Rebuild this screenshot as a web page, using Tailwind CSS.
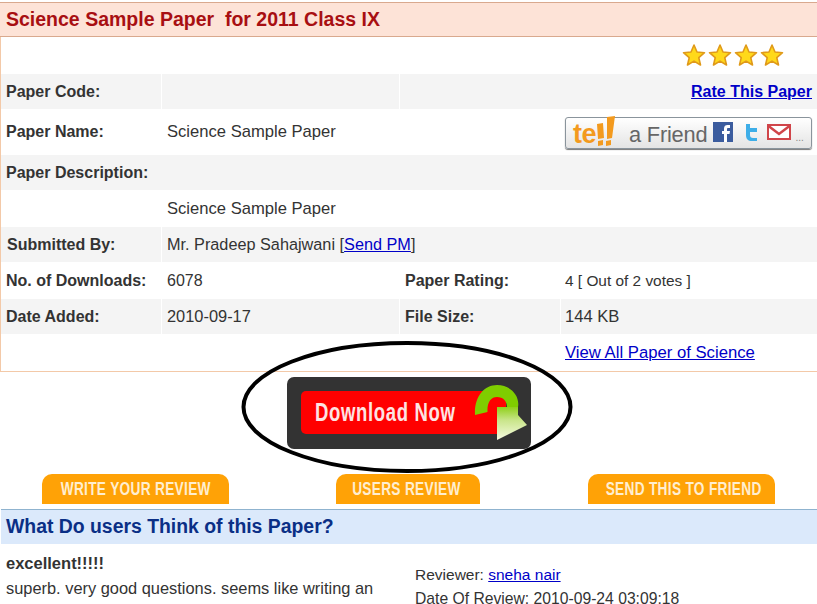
<!DOCTYPE html>
<html>
<head>
<meta charset="utf-8">
<script src="https://cdn.jsdelivr.net/npm/@tailwindcss/browser@4"></script>
</head>
<body class="bg-white">
<div class="relative w-[817px] h-[604px] overflow-hidden bg-white font-['Liberation_Sans',Arial,sans-serif] text-[16px] text-[#333]">
  <div class="h-[2px]"></div>
  <div class="h-[35px] bg-[#fde3d7] border-y border-[#d9a98e] pl-[6px] flex items-center text-[19.5px] font-bold text-[#a80f12] whitespace-pre">Science Sample Paper  for 2011 Class IX</div>

  <div class="grid grid-cols-[160px_237px_160px_1fr] gap-x-px border-b border-l border-[#f3c9a8] h-[335px] grid-rows-[37px_35px_46px_35px_37px_35px_37px_35px_1fr]">
    <div class="col-span-4 flex items-start justify-end pr-[33px] pt-[6px] gap-[2px]">
      <svg class="w-[24px] h-[24px]" viewBox="0 0 24 24"><path d="M12 2l3 7 7.500 .7-5.700 5 1.700 7.300-6.500-3.900-6.500 3.900 1.700-7.300-5.700-5 7.500-.7z" fill="#ffd91a" stroke="#e09a1a" stroke-width="1.600" stroke-linejoin="round"/></svg>
      <svg class="w-[24px] h-[24px]" viewBox="0 0 24 24"><path d="M12 2l3 7 7.500 .7-5.700 5 1.700 7.300-6.500-3.900-6.500 3.900 1.700-7.300-5.700-5 7.500-.7z" fill="#ffd91a" stroke="#e09a1a" stroke-width="1.600" stroke-linejoin="round"/></svg>
      <svg class="w-[24px] h-[24px]" viewBox="0 0 24 24"><path d="M12 2l3 7 7.500 .7-5.700 5 1.700 7.300-6.500-3.900-6.500 3.900 1.700-7.300-5.700-5 7.500-.7z" fill="#ffd91a" stroke="#e09a1a" stroke-width="1.600" stroke-linejoin="round"/></svg>
      <svg class="w-[24px] h-[24px]" viewBox="0 0 24 24"><path d="M12 2l3 7 7.500 .7-5.700 5 1.700 7.300-6.500-3.900-6.500 3.900 1.700-7.300-5.700-5 7.500-.7z" fill="#ffd91a" stroke="#e09a1a" stroke-width="1.600" stroke-linejoin="round"/></svg>
    </div>

    <div class="bg-[#f4f4f4] flex items-center pl-[5px] font-bold">Paper Code:</div>
    <div class="bg-[#f4f4f4]"></div>
    <div class="col-span-2 bg-[#f4f4f4] flex items-center justify-end pr-[5px] font-bold"><a class="underline text-[#0000c8]" href="#">Rate This Paper</a></div>

    <div class="flex items-center pl-[5px] font-bold">Paper Name:</div>
    <div class="flex items-center pl-[5px] text-[16.6px]">Science Sample Paper</div>
    <div></div>
    <div class="flex items-center pl-[4px]">
      <div class="w-[247px] h-[32px] mt-[1px] rounded-[3px] border border-[#8a949c] shadow-[0_1px_1px_#777] bg-gradient-to-b from-white to-[#e4e4e4] flex items-center relative">
        <span class="ml-[7px] text-[27px] leading-none font-bold text-[#f39a1e] tracking-[-0.5px] mt-[4px]">te</span><svg class="w-[24px] h-[30px] -mt-[3px]" viewBox="0 0 24 30"><path d="M1 8l6-1 1 15-6 1zM11 1l8-1-3 22-5 1zM2 25l5-1v5l-5 1zM10 25l5-1v5l-5 1z" fill="#f39a1e"/></svg>
        <span class="ml-[9px] text-[21.8px] leading-none text-[#666] mt-[5px] tracking-[-0.2px] whitespace-nowrap">a Friend</span>
        <svg class="ml-[6px] w-[20px] h-[20px] -mt-[1px] shrink-0" viewBox="0 0 20 20"><rect width="20" height="20" fill="#3b5c9e"/><path d="M11 20v-8H9V9h2V6.500C11 4 12.500 3 14.500 3H17v3h-1.800c-.8 0-1.200.4-1.200 1.200V9h3l-.5 3H14v8z" fill="#fff"/></svg>
        <svg class="ml-[11px] w-[15px] h-[19px] -mt-[1px] shrink-0" viewBox="0 0 15 19"><path d="M2 1h4v4h7v4H6v3c0 2 1 3 3 3h4v3H8c-4 0-6-2-6-6z" fill="#3eaee8"/></svg>
        <svg class="ml-[8px] w-[24px] h-[16px] -mt-[2px] shrink-0" viewBox="0 0 24 16"><rect x="1" y="1" width="22" height="14" fill="#fff" stroke="#d0454a" stroke-width="2"/><path d="M1.500 2l10.500 8L22.500 2" fill="none" stroke="#d0454a" stroke-width="2.500"/></svg>
        <span class="ml-[4px] text-[10px] leading-none text-[#888] mt-[10px]">...</span>
      </div>
    </div>

    <div class="col-span-4 bg-[#f4f4f4] flex items-center pl-[5px] font-bold">Paper Description:</div>

    <div></div>
    <div class="col-span-3 flex items-center pl-[5px] pt-px text-[16.6px]">Science Sample Paper</div>

    <div class="bg-[#f4f4f4] flex items-center pl-[6px] font-bold">Submitted By:</div>
    <div class="col-span-3 bg-[#f4f4f4] flex items-center pl-[5px] whitespace-pre text-[16.25px]">Mr. Pradeep Sahajwani [<a class="underline text-[#0000c8]" href="#">Send PM</a>]</div>

    <div class="flex items-center pl-[5px] font-bold">No. of Downloads:</div>
    <div class="flex items-center pl-[5px]">6078</div>
    <div class="flex items-center pl-[5px] font-bold">Paper Rating:</div>
    <div class="flex items-center pl-[4px] text-[15.4px]">4 [ Out of 2 votes ]</div>

    <div class="bg-[#f4f4f4] flex items-center pl-[5px] font-bold">Date Added:</div>
    <div class="bg-[#f4f4f4] flex items-center pl-[5px] text-[16.4px]">2010-09-17</div>
    <div class="bg-[#f4f4f4] flex items-center pl-[5px] font-bold">File Size:</div>
    <div class="bg-[#f4f4f4] flex items-center pl-[4px] pt-px text-[16.6px]">144 KB</div>

    <div class="col-span-3"></div>
    <div class="flex items-center pl-[4px] text-[16.7px] pt-px"><a class="underline text-[#0000c8]" href="#">View All Paper of Science</a></div>
  </div>

  <div class="flex justify-center pt-[5px] h-[102px] ml-[2px]">
    <div class="relative w-[244px] h-[72px] rounded-[7px] bg-[#333] -ml-[2px]">
      <div class="absolute left-[14px] top-[14px] w-[205px] h-[43px] rounded-[5px] bg-[#f00] flex items-center pl-[14px] pb-[1px]">
        <span class="inline-block origin-left scale-x-[0.74] font-bold text-[25px] leading-none text-[#fde3e3] tracking-[0.9px] whitespace-nowrap">Download Now</span>
      </div>
      <svg class="absolute left-[185px] top-0 w-[59px] h-[72px]" viewBox="0 0 59 72">
        <defs>
          <linearGradient id="arrow" x1="0" y1="0" x2="0" y2="1"><stop offset="0" stop-color="#8fd01a"/><stop offset="0.4" stop-color="#c9e58a"/><stop offset="1" stop-color="#f6fbe2"/></linearGradient>
        </defs>
        <path d="M3 38C2 20 12 8 25 8C39 8 48 19 46 30L35 30C35 24 31 20 25 20C19 20 15 25 15.500 35Z" fill="#7fce00"/>
        <path d="M25 30L46 30L46 38L55 48L25 63Z" fill="url(#arrow)"/>
      </svg>
    </div>
  </div>

  <div class="flex h-[30px]">
    <div class="ml-[42px] w-[187px] rounded-t-[10px] bg-[#ffa206] flex items-center justify-center"><span class="inline-block scale-x-[0.76] font-bold text-[18px] text-[#ffeed0] whitespace-nowrap tracking-[0.4px]">WRITE YOUR REVIEW</span></div>
    <div class="ml-[107px] w-[144px] rounded-t-[10px] bg-[#ffa206] flex items-center justify-center pr-[4px]"><span class="inline-block scale-x-[0.76] font-bold text-[18px] text-[#ffeed0] whitespace-nowrap tracking-[0.4px]">USERS REVIEW</span></div>
    <div class="ml-[108px] w-[187px] rounded-t-[10px] bg-[#ffa206] flex items-center justify-center pl-[4px]"><span class="inline-block scale-x-[0.76] font-bold text-[18px] text-[#ffeed0] whitespace-nowrap tracking-[0.4px]">SEND THIS TO FRIEND</span></div>
  </div>

  <div class="mt-[5px] h-[35px] bg-[#dbe9fb] border-t border-[#8fb3cf] ml-px pl-[5px] flex items-center text-[19.4px] font-bold text-[#0a2f86]">What Do users Think of this Paper?</div>

  <div class="flex pl-[6px]">
    <div class="w-[409px] pt-[9px]">
      <div class="font-bold leading-[20px] text-[16.5px]">excellent!!!!!</div>
      <div class="mt-[5px] leading-[20px] text-[16.4px] whitespace-nowrap">superb. very good questions. seems like writing an</div>
    </div>
    <div class="pt-[21px]">
      <div class="leading-[20px] text-[15.5px]">Reviewer: <a class="underline text-[#0000c8]" href="#">sneha nair</a></div>
      <div class="mt-[4px] leading-[20px] whitespace-nowrap text-[15.7px]">Date Of Review: 2010-09-24 03:09:18</div>
    </div>
  </div>

  <svg class="absolute left-[240px] top-[340px] w-[334px] h-[134px] pointer-events-none" viewBox="0 0 334 134"><ellipse cx="167" cy="67" rx="163.500" ry="64" fill="none" stroke="#000" stroke-width="4"/></svg>
</div>
</body>
</html>
